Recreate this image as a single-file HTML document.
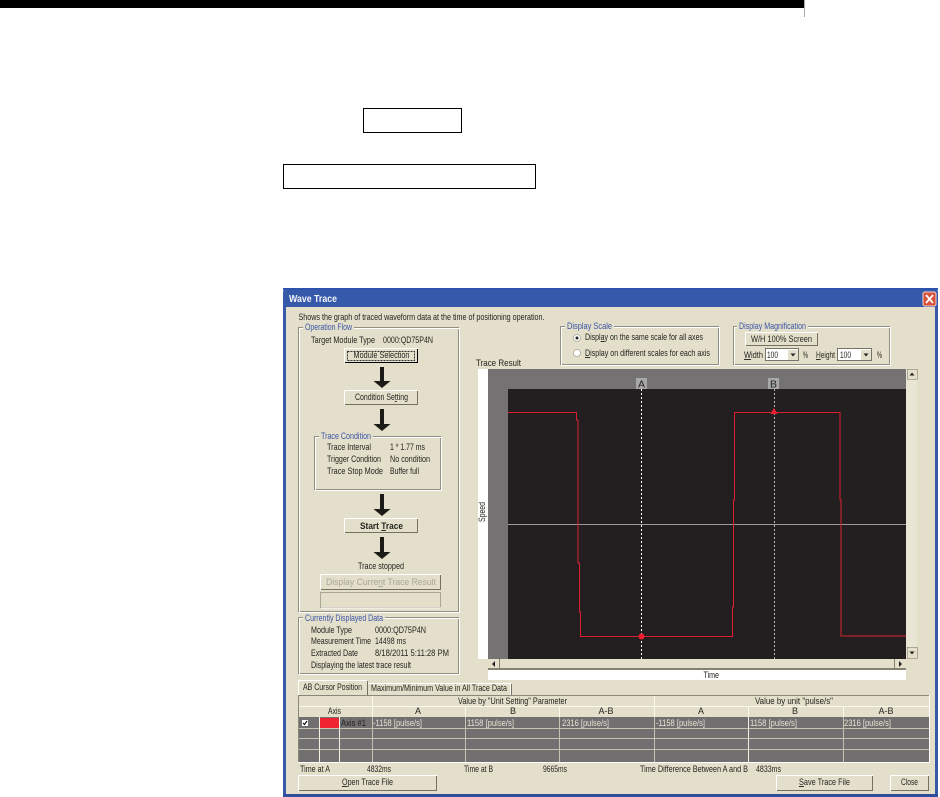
<!DOCTYPE html>
<html lang="en">
<head>
<meta charset="utf-8">
<title>Wave Trace</title>
<style>
html,body{margin:0;padding:0;background:#fff;width:940px;height:797px;overflow:hidden}
svg{display:block;position:absolute;left:0;top:0}
text{font-family:"Liberation Sans",sans-serif;font-size:9.5px;fill:#26251f;white-space:pre;filter:blur(.25px)}
.b{fill:#3c55a8}
.g{fill:#a9a696}
.w{fill:#e6e3d2}
.s{font-size:9px}
.u{text-decoration:underline}
rect,line,path.c{shape-rendering:crispEdges}
.f{fill:#e3dfcb}
</style>
</head>
<body>
<svg width="940" height="797" viewBox="0 0 940 797">
<!-- page furniture -->
<rect x="0" y="0" width="804" height="8" fill="#000"/>
<rect x="804" y="0" width="1" height="17" fill="#aaa"/>
<rect x="363.5" y="108.5" width="98" height="24" fill="none" stroke="#000" stroke-width="1.2"/>
<rect x="283.5" y="164.5" width="252" height="24" fill="none" stroke="#000" stroke-width="1.2"/>

<!-- window -->
<path d="M283 797V293q0-5 5-5H933q5 0 5 5V797Z" fill="#3659aa"/>
<rect x="286" y="307" width="649" height="487" fill="#e3dfcb"/>
<rect x="283" y="794" width="655" height="3" fill="#2f4f9d"/>
<rect x="283" y="288" width="655" height="2" fill="#2c52ad"/>
<text x="289" y="302" textLength="48" lengthAdjust="spacingAndGlyphs" style="fill:#f2f4fa;font-weight:bold;font-size:10px">Wave Trace</text>
<rect x="923" y="292" width="13" height="14" rx="2" fill="#d9503a" stroke="#f3d5cc" stroke-width="1"/>
<path d="M926 295l7 8M933 295l-7 8" stroke="#fff" stroke-width="1.8" fill="none"/>

<text x="298.5" y="320" textLength="246" lengthAdjust="spacingAndGlyphs">Shows the graph of traced waveform data at the time of positioning operation.</text>

<!-- Operation Flow group -->
<rect x="298.5" y="327.5" width="160" height="284" fill="none" stroke="#918f80"/>
<rect x="299.5" y="328.5" width="160" height="284" fill="none" stroke="#fff"/>
<rect x="303" y="325" width="51" height="8" class="f"/>
<text class="b" x="305" y="330" textLength="47" lengthAdjust="spacingAndGlyphs">Operation Flow</text>
<text x="311" y="343" textLength="64" lengthAdjust="spacingAndGlyphs">Target Module Type</text>
<text x="383" y="343" textLength="50" lengthAdjust="spacingAndGlyphs">0000:QD75P4N</text>

<!-- Module Selection -->
<rect x="344" y="348" width="74" height="15" fill="#fff"/>
<rect x="345" y="349" width="73" height="14" fill="#000"/>
<rect x="345" y="349" width="72" height="13" class="f"/>
<rect x="347.500" y="351.500" width="67" height="9" fill="none" stroke="#333" stroke-dasharray="2 1"/>
<text x="353.5" y="358" textLength="56" lengthAdjust="spacingAndGlyphs">Module Selection</text>

<!-- arrows -->
<path d="M380 367h4v14h6.500l-8.500 7-8.500-7h6.500Z" fill="#1c1b18"/>
<path d="M380 409h4v15h6.500l-8.500 7-8.500-7h6.500Z" fill="#1c1b18"/>
<path d="M380 494h4v15h6.500l-8.500 7-8.500-7h6.500Z" fill="#1c1b18"/>
<path d="M380 537h4v15h6.500l-8.500 7-8.500-7h6.500Z" fill="#1c1b18"/>

<!-- Condition Setting -->
<rect x="344" y="390" width="74" height="15" fill="#fff"/>
<rect x="345" y="391" width="73" height="14" fill="#74725f"/>
<rect x="345" y="391" width="72" height="13" class="f"/>
<text x="355" y="400" textLength="53" lengthAdjust="spacingAndGlyphs">Condition Se<tspan class="u">t</tspan>ting</text>

<!-- Trace Condition -->
<rect x="314.500" y="436.500" width="126" height="53" fill="none" stroke="#918f80"/>
<rect x="315.500" y="437.500" width="126" height="53" fill="none" stroke="#fff"/>
<rect x="319" y="434" width="54" height="8" class="f"/>
<text class="b" x="321" y="439" textLength="50" lengthAdjust="spacingAndGlyphs">Trace Condition</text>
<text x="327" y="450" textLength="44" lengthAdjust="spacingAndGlyphs">Trace Interval</text>
<text x="390" y="450" textLength="35" lengthAdjust="spacingAndGlyphs">1 * 1.77 ms</text>
<text x="327" y="462" textLength="54" lengthAdjust="spacingAndGlyphs">Trigger Condition</text>
<text x="390" y="462" textLength="40" lengthAdjust="spacingAndGlyphs">No condition</text>
<text x="327" y="474" textLength="56" lengthAdjust="spacingAndGlyphs">Trace Stop Mode</text>
<text x="390" y="474" textLength="29" lengthAdjust="spacingAndGlyphs">Buffer full</text>

<!-- Start Trace -->
<rect x="344" y="518" width="74" height="15" fill="#fff"/>
<rect x="345" y="519" width="73" height="14" fill="#74725f"/>
<rect x="345" y="519" width="72" height="13" class="f"/>
<text x="360" y="529" textLength="43" lengthAdjust="spacingAndGlyphs" style="font-weight:bold">Start <tspan class="u">T</tspan>race</text>

<text x="358" y="569" textLength="46" lengthAdjust="spacingAndGlyphs">Trace stopped</text>

<!-- Display current -->
<rect x="320" y="574" width="121" height="16" fill="#fff"/>
<rect x="321" y="575" width="120" height="15" fill="#74725f"/>
<rect x="321" y="575" width="119" height="14" class="f"/>
<text class="g" x="326" y="585" textLength="110" lengthAdjust="spacingAndGlyphs">Display Curre<tspan class="u">n</tspan>t Trace Result</text>
<rect x="320.500" y="592.500" width="120" height="15" fill="none" stroke="#a9a696"/>
<line x1="321" y1="608" x2="441" y2="608" stroke="#fff"/>

<!-- Currently Displayed Data -->
<rect x="298.500" y="617.500" width="160" height="56" fill="none" stroke="#918f80"/>
<rect x="299.500" y="618.500" width="160" height="56" fill="none" stroke="#fff"/>
<rect x="303" y="615" width="82" height="8" class="f"/>
<text class="b" x="305" y="621" textLength="78" lengthAdjust="spacingAndGlyphs">Currently Displayed Data</text>
<text x="311" y="633" textLength="41" lengthAdjust="spacingAndGlyphs">Module Type</text>
<text x="375" y="633" textLength="51" lengthAdjust="spacingAndGlyphs">0000:QD75P4N</text>
<text x="311" y="644" textLength="60" lengthAdjust="spacingAndGlyphs">Measurement Time</text>
<text x="375" y="644" textLength="31" lengthAdjust="spacingAndGlyphs">14498 ms</text>
<text x="311" y="656" textLength="47" lengthAdjust="spacingAndGlyphs">Extracted Date</text>
<text x="375" y="656" textLength="74" lengthAdjust="spacingAndGlyphs">8/18/2011 5:11:28 PM</text>
<text x="311" y="668" textLength="100" lengthAdjust="spacingAndGlyphs">Displaying the latest trace result</text>

<!-- Display Scale -->
<rect x="560.500" y="326.500" width="158" height="38" fill="none" stroke="#918f80"/>
<rect x="561.500" y="327.500" width="158" height="38" fill="none" stroke="#fff"/>
<rect x="565" y="323" width="49" height="8" class="f"/>
<text class="b" x="567" y="329" textLength="45" lengthAdjust="spacingAndGlyphs">Display Scale</text>
<circle cx="577" cy="338" r="3.500" fill="#fff" stroke="#a9a696" stroke-width=".8"/>
<circle cx="577" cy="338" r="1.500" fill="#222"/>
<circle cx="577" cy="353" r="3.500" fill="#fff" stroke="#a9a696" stroke-width=".8"/>
<text x="585" y="340" textLength="118" lengthAdjust="spacingAndGlyphs">Displ<tspan class="u">a</tspan>y on the same scale for all axes</text>
<text x="585" y="356" textLength="125" lengthAdjust="spacingAndGlyphs"><tspan class="u">D</tspan>isplay on different scales for each axis</text>

<!-- Display Magnification -->
<rect x="733.500" y="326.500" width="156" height="38" fill="none" stroke="#918f80"/>
<rect x="734.500" y="327.500" width="156" height="38" fill="none" stroke="#fff"/>
<rect x="737" y="323" width="71" height="8" class="f"/>
<text class="b" x="739" y="329" textLength="67" lengthAdjust="spacingAndGlyphs">Display Magnification</text>
<rect x="745" y="332" width="73" height="14" fill="#fff"/>
<rect x="746" y="333" width="72" height="13" fill="#74725f"/>
<rect x="746" y="333" width="71" height="12" class="f"/>
<text x="751" y="342" textLength="61" lengthAdjust="spacingAndGlyphs">W/H 100% Screen</text>
<text x="744" y="358" textLength="19" lengthAdjust="spacingAndGlyphs"><tspan class="u">W</tspan>idth</text>
<rect x="765.500" y="348.500" width="33" height="12" fill="#fff" stroke="#777566"/>
<rect x="788" y="350" width="10" height="10" class="f"/>
<path d="M790.500 353.500h5l-2.500 3Z" fill="#222"/>
<text x="767" y="358" textLength="11" lengthAdjust="spacingAndGlyphs">100</text>
<text x="803" y="358" textLength="5" lengthAdjust="spacingAndGlyphs">%</text>
<text x="816" y="358" textLength="19" lengthAdjust="spacingAndGlyphs"><tspan class="u">H</tspan>eight</text>
<rect x="837.500" y="348.500" width="34" height="12" fill="#fff" stroke="#777566"/>
<rect x="861" y="350" width="10" height="10" class="f"/>
<path d="M863.500 353.500h5l-2.500 3Z" fill="#222"/>
<text x="840" y="358" textLength="11" lengthAdjust="spacingAndGlyphs">100</text>
<text x="877" y="358" textLength="5" lengthAdjust="spacingAndGlyphs">%</text>

<!-- Plot -->
<text x="476" y="366" textLength="45" lengthAdjust="spacingAndGlyphs">Trace Result</text>
<rect x="478" y="369" width="10" height="290" fill="#fff"/>
<rect x="488" y="369" width="418" height="20" fill="#747273"/>
<rect x="488" y="389" width="20" height="270" fill="#747273"/>
<rect x="508" y="389" width="398" height="270" fill="#231f20"/>
<text transform="translate(485,522) rotate(-90)" x="0" y="0" textLength="20" lengthAdjust="spacingAndGlyphs">Speed</text>

<line x1="508" y1="524.500" x2="906" y2="524.500" stroke="#9c9a9a"/>

<!-- cursors -->
<rect x="636" y="378" width="11" height="11" fill="#a8a8a8"/>
<text x="641.500" y="387.500" text-anchor="middle" style="font-size:10.500px;fill:#222">A</text>
<rect x="768" y="378" width="11" height="11" fill="#a8a8a8"/>
<text x="773.500" y="387.500" text-anchor="middle" style="font-size:10.500px;fill:#222">B</text>
<line x1="641.500" y1="389" x2="641.500" y2="659" stroke="#fff" stroke-dasharray="2 2"/>
<line x1="774.500" y1="389" x2="774.500" y2="659" stroke="#b5b5b5" stroke-dasharray="2 2"/>

<!-- waveform -->
<path d="M508 412.500H576.500V420H578V563H579.500V612H580.500V636.500H732.500V607H733.500V500H734.500V412.500H840V500H841V636H906" fill="none" stroke="#d8202e" stroke-width="1.100" shape-rendering="crispEdges"/>
<circle cx="641.500" cy="636.500" r="3" fill="#ee1c2e"/>
<path d="M774 408l3.500 6h-7Z" fill="#ee1c2e"/>

<!-- v scroll -->
<rect x="906" y="369" width="11" height="289" fill="#e9e6d6"/>
<rect x="907" y="369" width="10" height="10" class="f" stroke="#74725f" stroke-width=".5"/>
<path d="M909.500 375.500h5l-2.500-3Z" fill="#222"/>
<rect x="907" y="647" width="10" height="11" class="f" stroke="#74725f" stroke-width=".5"/>
<path d="M909.500 651.500h5l-2.500 3Z" fill="#222"/>

<!-- h scroll -->
<rect x="488" y="659" width="418" height="10" fill="#e3dfcb"/>
<rect x="488" y="668" width="418" height="2" fill="#85836f"/>
<rect x="488" y="659" width="11" height="9" class="f"/>
<line x1="499.500" y1="659" x2="499.500" y2="669" stroke="#85836f"/>
<path d="M495 661l-3 3 3 3Z" fill="#222"/>
<rect x="895" y="659" width="11" height="9" class="f"/>
<line x1="894.500" y1="659" x2="894.500" y2="669" stroke="#85836f"/>
<path d="M899 661l3 3-3 3Z" fill="#222"/>
<rect x="488" y="670" width="418" height="10" fill="#fff"/>
<text x="703.500" y="678" textLength="15.500" lengthAdjust="spacingAndGlyphs">Time</text>

<!-- tabs -->
<rect x="367" y="683" width="144" height="12" class="f"/>
<path d="M367.500 695V683.500H510.500V695" fill="none" stroke="#fff"/>
<line x1="511.500" y1="684" x2="511.500" y2="695" stroke="#74725f"/>
<text x="371" y="691" textLength="136" lengthAdjust="spacingAndGlyphs">Maximum/Minimum Value in All Trace Data</text>
<rect x="298" y="680" width="69" height="16" class="f"/>
<path d="M298.500 696V680.500H366.500" fill="none" stroke="#fff"/>
<line x1="367.500" y1="681" x2="367.500" y2="695" stroke="#74725f"/>
<text x="303" y="690" textLength="59" lengthAdjust="spacingAndGlyphs">AB Cursor Position</text>

<!-- table -->
<rect x="298" y="695" width="632" height="68" fill="#fff"/>
<rect x="298" y="695" width="631" height="67" fill="#8a8878"/>
<rect x="299" y="696" width="630" height="66" class="f"/>
<rect x="299" y="717" width="630" height="45" fill="#716f70"/>
<g stroke="#fbf9ea">
<line x1="299" y1="706.500" x2="929" y2="706.500"/>
<line x1="372.500" y1="696" x2="372.500" y2="717"/>
<line x1="654.500" y1="696" x2="654.500" y2="717"/>
<line x1="465.500" y1="707" x2="465.500" y2="717"/>
<line x1="559.500" y1="707" x2="559.500" y2="717"/>
<line x1="748.500" y1="707" x2="748.500" y2="717"/>
<line x1="843.500" y1="707" x2="843.500" y2="717"/>
</g>
<g stroke="#c5c3b2">
<line x1="299" y1="728.500" x2="929" y2="728.500"/>
<line x1="299" y1="738.500" x2="929" y2="738.500"/>
<line x1="299" y1="749.500" x2="929" y2="749.500"/>
<line x1="372.500" y1="717" x2="372.500" y2="762"/>
<line x1="465.500" y1="717" x2="465.500" y2="762"/>
<line x1="559.500" y1="717" x2="559.500" y2="762"/>
<line x1="654.500" y1="717" x2="654.500" y2="762"/>
<line x1="843.500" y1="717" x2="843.500" y2="762"/>
</g>
<g stroke="#f4f2e2">
<line x1="319.500" y1="717" x2="319.500" y2="762"/>
<line x1="339.500" y1="717" x2="339.500" y2="762"/>
<line x1="748.500" y1="717" x2="748.500" y2="762"/>
</g>
<rect x="320" y="718" width="19" height="10" fill="#ee2433"/>
<rect x="302" y="720" width="6" height="6" fill="#fff"/>
<path d="M303 723l1.500 1.500 2.500-3.500" stroke="#111" stroke-width="1.200" fill="none"/>

<text x="458" y="704" textLength="109" lengthAdjust="spacingAndGlyphs">Value by "Unit Setting" Parameter</text>
<text x="755" y="704" textLength="78" lengthAdjust="spacingAndGlyphs">Value by unit "pulse/s"</text>
<text x="328" y="714" textLength="13" lengthAdjust="spacingAndGlyphs">Axis</text>
<text class="s" x="418" y="714" text-anchor="middle">A</text>
<text class="s" x="513" y="714" text-anchor="middle">B</text>
<text class="s" x="606" y="714" text-anchor="middle">A-B</text>
<text class="s" x="701" y="714" text-anchor="middle">A</text>
<text class="s" x="795" y="714" text-anchor="middle">B</text>
<text class="s" x="886" y="714" text-anchor="middle">A-B</text>
<g>
<text x="341" y="726" textLength="25" lengthAdjust="spacingAndGlyphs" style="fill:#1f1e1c">Axis #1</text>
<text class="w" x="373" y="726" textLength="49" lengthAdjust="spacingAndGlyphs">-1158 [pulse/s]</text>
<text class="w" x="467" y="726" textLength="47" lengthAdjust="spacingAndGlyphs">1158 [pulse/s]</text>
<text class="w" x="562" y="726" textLength="47" lengthAdjust="spacingAndGlyphs">2316 [pulse/s]</text>
<text class="w" x="656" y="726" textLength="49" lengthAdjust="spacingAndGlyphs">-1158 [pulse/s]</text>
<text class="w" x="750" y="726" textLength="47" lengthAdjust="spacingAndGlyphs">1158 [pulse/s]</text>
<text class="w" x="844" y="726" textLength="47" lengthAdjust="spacingAndGlyphs">2316 [pulse/s]</text>
</g>

<!-- bottom -->
<text x="300" y="772" textLength="30" lengthAdjust="spacingAndGlyphs">Time at A</text>
<text x="367" y="772" textLength="24" lengthAdjust="spacingAndGlyphs">4832ms</text>
<text x="464" y="772" textLength="29" lengthAdjust="spacingAndGlyphs">Time at B</text>
<text x="543" y="772" textLength="24" lengthAdjust="spacingAndGlyphs">9665ms</text>
<text x="640" y="772" textLength="108" lengthAdjust="spacingAndGlyphs">Time Difference Between A and B</text>
<text x="756" y="772" textLength="25" lengthAdjust="spacingAndGlyphs">4833ms</text>

<rect x="298" y="775" width="139" height="16" fill="#fff"/>
<rect x="299" y="776" width="138" height="15" fill="#74725f"/>
<rect x="299" y="776" width="137" height="14" class="f"/>
<text x="342" y="785" textLength="51" lengthAdjust="spacingAndGlyphs"><tspan class="u">O</tspan>pen Trace File</text>

<rect x="776" y="775" width="97" height="16" fill="#fff"/>
<rect x="777" y="776" width="96" height="15" fill="#74725f"/>
<rect x="777" y="776" width="95" height="14" class="f"/>
<text x="799" y="785" textLength="51" lengthAdjust="spacingAndGlyphs"><tspan class="u">S</tspan>ave Trace File</text>

<rect x="890" y="775" width="39" height="16" fill="#fff"/>
<rect x="891" y="776" width="38" height="15" fill="#74725f"/>
<rect x="891" y="776" width="37" height="14" class="f"/>
<text x="901" y="785" textLength="17" lengthAdjust="spacingAndGlyphs">Close</text>
</svg>
</body>
</html>
